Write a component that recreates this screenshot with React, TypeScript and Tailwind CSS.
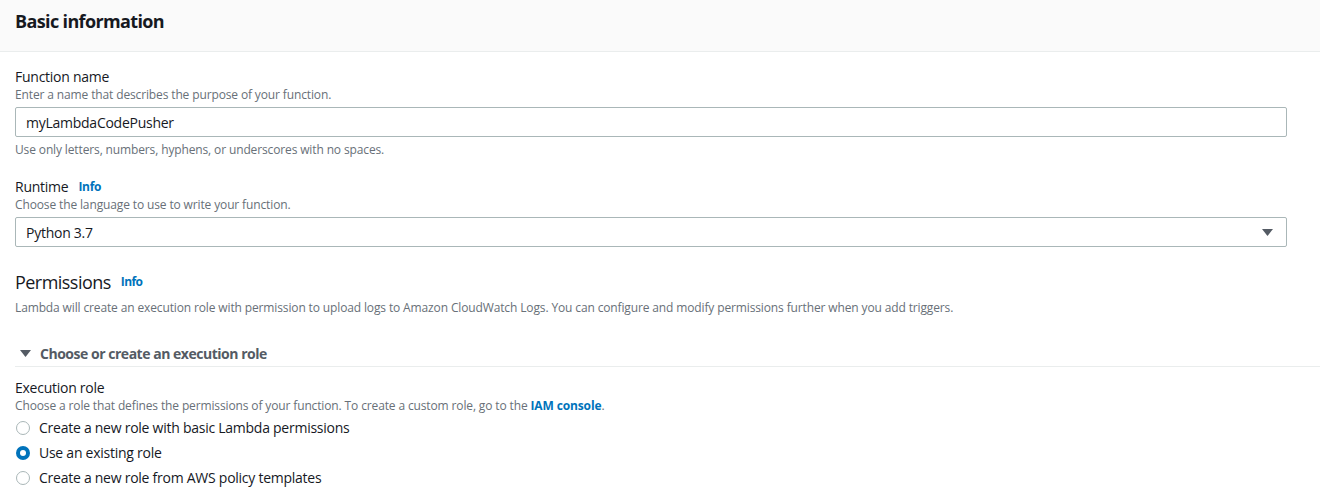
const font = { fontFamily: '"Open Sans", "Noto Sans", Arial, sans-serif' };

function Info() {
    return <span className="ml-[10px] text-[12px] font-bold text-[#0073bb]">Info</span>;
}

function Caret({ className }: { className?: string }) {
    return (
        <svg width="11" height="7" viewBox="0 0 11 7" className={className}>
            <path d="M0 0 H11 L5.5 7 Z" fill="#545b64" />
        </svg>
    );
}

function Radio({ label, checked }: { label: string; checked?: boolean }) {
    return (
        <div className="flex h-[25px] items-center">
            {checked ? (
                <span className="ml-[1px] flex h-[14px] w-[14px] items-center justify-center rounded-full bg-[#0073bb]">
                    <span className="h-[6px] w-[6px] rounded-full bg-white" />
                </span>
            ) : (
                <span className="ml-[1px] h-[14px] w-[14px] rounded-full border border-[#aab7b8] bg-white" />
            )}
            <span className="ml-[9px] text-[14px] text-[#16191f]">{label}</span>
        </div>
    );
}

const hint = 'text-[12px] leading-[16px] tracking-[-0.011em] text-[#687078]';

export default function App() {
    return (
        <div className="h-[498px] w-[1320px] overflow-hidden bg-white tracking-[-0.016em]" style={font}>
            <div className="h-[52px] border-b border-[#eaeded] bg-[#fafafa] px-[15px] pt-[9px]">
                <h2 className="text-[18px] font-bold leading-[24px] tracking-[-0.035em] text-[#16191f]">Basic information</h2>
            </div>

            <div className="pl-[15px]">
                <div className="w-[1272px]">
                    <div className="mt-[15px] text-[14px] leading-[20px] text-[#16191f]">Function name</div>
                    <div className={hint}>Enter a name that describes the purpose of your function.</div>
                    <div className="mt-[4px] flex h-[30px] items-center rounded-[2px] border border-[#aab7b8] px-[10px] text-[14px] text-[#16191f]">
                        myLambdaCodePusher
                    </div>
                    <div className={`mt-[5px] ${hint}`}>Use only letters, numbers, hyphens, or underscores with no spaces.</div>

                    <div className="mt-[19px] flex items-center text-[14px] leading-[20px] text-[#16191f]">
                        Runtime <Info />
                    </div>
                    <div className={hint}>Choose the language to use to write your function.</div>
                    <div className="mt-[4px] flex h-[30px] items-center justify-between rounded-[2px] border border-[#aab7b8] pl-[10px] pr-[13px] text-[14px] text-[#16191f]">
                        <span>Python 3.7</span>
                        <Caret />
                    </div>
                </div>

                <div className="mt-[23px] flex items-center text-[18px] leading-[24px] tracking-[-0.03em] text-[#16191f]">
                    Permissions <Info />
                </div>
                <div className={`mt-[6px] ${hint}`}>
                    Lambda will create an execution role with permission to upload logs to Amazon CloudWatch Logs. You can configure and modify
                    permissions further when you add triggers.
                </div>

                <div className="mt-[27px] flex h-[20px] items-center text-[14px] font-bold tracking-[-0.034em] text-[#545b64]">
                    <Caret className="ml-[5px] mr-[9px]" />
                    Choose or create an execution role
                </div>
                <div className="h-[4px] border-b border-[#eaeded]" />

                <div className="mt-[11px] text-[14px] leading-[20px] text-[#16191f]">Execution role</div>
                <div className={hint}>
                    Choose a role that defines the permissions of your function. To create a custom role, go to the{' '}
                    <span className="font-bold text-[#0073bb]">IAM console</span>.
                </div>
                <div className="mt-[1px]">
                    <Radio label="Create a new role with basic Lambda permissions" />
                    <Radio label="Use an existing role" checked />
                    <Radio label="Create a new role from AWS policy templates" />
                </div>
            </div>
        </div>
    );
}
